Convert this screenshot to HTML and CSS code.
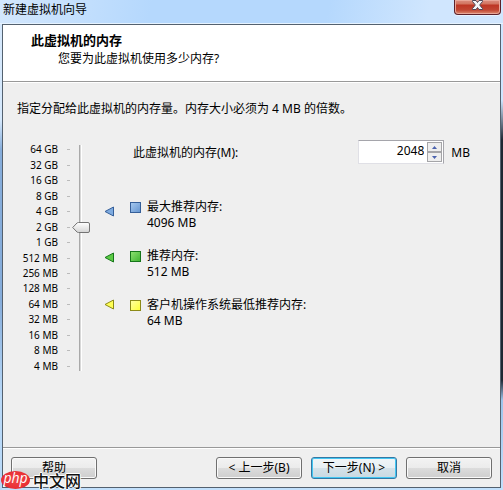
FILE: index.html
```html
<!DOCTYPE html>
<html lang="zh-CN">
<head>
<meta charset="utf-8">
<title>新建虚拟机向导</title>
<link rel="stylesheet" href="styles.css">
</head>
<body>
<header class="titlebar">
  <span class="title">新建虚拟机向导</span>
  <button class="close" type="button" aria-label="关闭">
    <svg width="13" height="11" viewBox="0 0 13 11"><path d="M1.5 .5H5L6.5 2.5 8 .5h3.500v1L9 4.500v1L11.500 8.500v1H8L6.500 7.500 5 9.500H1.500v-1L4 5.500v-1L1.500 1.500z" fill="#f4f4f6" stroke="#4c4658" stroke-width="1"/></svg>
  </button>
</header>
<form class="client">
  <div class="banner">
    <h1>此虚拟机的内存</h1>
    <p>您要为此虚拟机使用多少内存?</p>
  </div>
  <main>
    <p class="intro">指定分配给此虚拟机的内存量。内存大小必须为 4 MB 的倍数。</p>
    <div class="settings">
      <div class="scale">
        <ol class="ticks">
          <li>64 GB</li><li>32 GB</li><li>16 GB</li><li>8 GB</li><li>4 GB</li>
          <li>2 GB</li><li>1 GB</li><li>512 MB</li><li>256 MB</li><li>128 MB</li>
          <li>64 MB</li><li>32 MB</li><li>16 MB</li><li>8 MB</li><li>4 MB</li>
        </ol>
        <input class="slider" type="range" min="0" max="14" value="9" aria-label="内存">
        <div class="markers">
          <svg class="max" width="11" height="11" viewBox="0 0 11 11"><path d="M1 5.500 9.500 1v9z" fill="#7eabe0" stroke="#355f99"/></svg>
          <svg class="rec" width="11" height="11" viewBox="0 0 11 11"><path d="M1 5.500 9.500 1v9z" fill="#5ccb45" stroke="#16761b"/></svg>
          <svg class="min" width="11" height="11" viewBox="0 0 11 11"><path d="M1 5.500 9.500 1v9z" fill="#ffff55" stroke="#8c8a18"/></svg>
        </div>
      </div>
      <div class="details">
        <div class="field">
          <label for="memory">此虚拟机的内存(M):</label>
          <div class="spinner">
            <input id="memory" type="text" value="2048">
            <div class="steps">
              <button type="button" aria-label="增加"><svg width="5" height="3" viewBox="0 0 5 3"><path d="M0 3 2.500 0 5 3z" fill="#4b62ae"/></svg></button>
              <button type="button" aria-label="减少"><svg width="5" height="3" viewBox="0 0 5 3"><path d="M0 0 2.500 3 5 0z" fill="#4b62ae"/></svg></button>
            </div>
          </div>
          <span>MB</span>
        </div>
        <dl class="legend">
          <div class="blue"><dt>最大推荐内存:</dt><dd>4096 MB</dd></div>
          <div class="green"><dt>推荐内存:</dt><dd>512 MB</dd></div>
          <div class="yellow"><dt>客户机操作系统最低推荐内存:</dt><dd>64 MB</dd></div>
        </dl>
      </div>
    </div>
  </main>
  <footer>
    <button class="btn help" type="button">帮助</button>
    <button class="btn" type="button">&lt; 上一步(B)</button>
    <button class="btn primary" type="button">下一步(N) &gt;</button>
    <button class="btn" type="button">取消</button>
  </footer>
</form>
<div class="watermark"><span class="logo">php</span><span class="site">中文网</span></div>
</body>
</html>
```
FILE: styles.css
```css
* {
  box-sizing: border-box;
}

body {
  display: flex;
  flex-direction: column;
  min-height: 100vh;
  margin: 0;
  background:
    linear-gradient(#cfe6ff 0 100px, #1e2733 140px 380px, #9cc4ea 400px, #c2e0fc) right / 2px 100% no-repeat,
    linear-gradient(#d5e8fc 0 120px, #86addb 150px 300px, #b9d9f8 400px) left / 2px 100% no-repeat,
    #c2e0fc;
  color: #000;
  font: 12px/16px "Noto Sans", "Noto Sans CJK SC", sans-serif;
}

h1, p, ol, dl, dd {
  margin: 0;
  padding: 0;
}

button, input {
  font: inherit;
  color: inherit;
}

.titlebar {
  display: flex;
  justify-content: space-between;
  height: 24px;
  padding: 0 2px 0 3px;
  border-bottom: 1px solid #e6f3ff;
  background: linear-gradient(100deg, #d3e7fd, #b5d8fd 30%, #b5d8fd 65%, #d0e6fe 85%);
}

.title {
  padding-top: 2px;
}

.close {
  display: flex;
  justify-content: center;
  width: 47px;
  height: 15px;
  padding: 0;
  border: 1px solid #5c2029;
  border-top: 0;
  border-radius: 0 0 4px 4px;
  background: linear-gradient(#dc8e80, #d2745f 4px, #bd3524 5px, #c14632 10px, #dd8d72);
  box-shadow: inset 0 0 0 1px #e9a799, 0 1px #e8f3ff;
}

.client {
  display: flex;
  flex: 1;
  flex-direction: column;
  margin: 0 2px 2px;
  border: 1px solid #54616f;
  background: #efefef;
}

.banner {
  height: 58px;
  padding: 6px 28px 0;
  border-bottom: 1px solid #fff;
  background: #fff linear-gradient(#999, #999) bottom / 100% 1px no-repeat;
}

.banner h1 {
  padding-bottom: 2px;
  font-size: 13px;
  line-height: 18px;
}

.banner p {
  padding-left: 27px;
}

main {
  flex: 1;
  padding: 18px 14px 0;
}

.settings {
  display: flex;
  gap: 15px;
  padding-top: 25px;
}

.scale {
  display: flex;
  height: 232px;
}

.ticks {
  display: flex;
  flex-direction: column;
  width: 53px;
  font-size: 10px;
  list-style: none;
}

.ticks li {
  display: flex;
  flex: 1;
  align-items: center;
  justify-content: flex-end;
  gap: 9px;
  line-height: 15px;
}

.ticks li::after {
  width: 3px;
  height: 1px;
  background: #bbb;
  content: "";
}

.slider {
  width: 20px;
  height: 226px;
  margin: 3px 0 0 2px;
  appearance: none;
  background: linear-gradient(90deg, #a9a9a9 0 1px, #d8d8d8 1px 2px, #fff 2px 3px) 7px 0 / 3px 100% no-repeat;
  writing-mode: vertical-lr;
  direction: rtl;
}

.slider::-webkit-slider-runnable-track {
  width: 20px;
  height: 100%;
}

.slider::-webkit-slider-thumb {
  width: 20px;
  height: 11px;
  appearance: none;
  background: url("data:image/svg+xml,%3Csvg xmlns='http://www.w3.org/2000/svg' width='20' height='11'%3E%3Cdefs%3E%3ClinearGradient id='g' x2='0' y2='1'%3E%3Cstop stop-color='%23fff'/%3E%3Cstop offset='1' stop-color='%23d4d4d4'/%3E%3C/linearGradient%3E%3C/defs%3E%3Cpath d='M.7 5.500 5 1Q5.500.5 6.500.5H16Q17.500.5 17.500 2V9Q17.500 10.500 16 10.500H6.500Q5.500 10.500 5 10z' fill='url(%23g)' stroke='%23747474'/%3E%3C/svg%3E") no-repeat;
}

.markers {
  display: grid;
  grid-template-rows: repeat(15, 1fr);
  align-items: center;
  margin-left: 12px;
}

.max {
  grid-row: 5;
}

.rec {
  grid-row: 8;
}

.min {
  grid-row: 11;
}

.details {
  flex: 1;
}

.field {
  display: flex;
  align-items: center;
  height: 24px;
  margin: -2px 16px 0 3px;
}

.field label {
  flex: 1;
  padding-top: 2px;
}

.field span {
  padding-top: 2px;
}

.spinner {
  display: flex;
  width: 86px;
  height: 24px;
  margin-right: 7px;
  padding: 1px;
  border: 1px solid;
  border-color: #a5a5ab #a5a5ab #e0e0e6 #e0e0e6;
  background: #fff;
}

.spinner input {
  flex: 1;
  min-width: 0;
  padding: 0 3px 2px;
  border: 0;
  outline: 0;
  background: none;
  text-align: right;
}

.steps {
  display: grid;
  grid-template-rows: 1fr 1fr;
  width: 15px;
}

.steps button {
  display: flex;
  align-items: center;
  justify-content: center;
  padding: 0;
  border: 1px solid #a5a5a8;
  background: #eee;
}

.legend {
  display: grid;
  gap: 17px;
  padding-top: 35px;
}

.legend div {
  display: grid;
  grid-template-columns: 9px 1fr;
  column-gap: 8px;
  align-items: center;
}

.legend div::before {
  width: 9px;
  height: 9px;
  border: 1px solid;
  content: "";
}

.legend dd {
  grid-column: 2;
}

.legend .blue::before {
  border-color: #355f99;
  background: linear-gradient(135deg, #a5c8ef, #6796d0);
}

.legend .green::before {
  border-color: #16761b;
  background: linear-gradient(135deg, #8be070, #43b535);
}

.legend .yellow::before {
  border-color: #8c8a18;
  background: linear-gradient(135deg, #ffffa0, #ffff3a);
}

footer {
  display: flex;
  gap: 9px;
  padding: 9px 8px 8px;
  border-top: 1px solid #999;
  box-shadow: inset 0 1px #fff;
}

.btn {
  width: 86px;
  height: 22px;
  padding: 0;
  border: 1px solid #707070;
  border-radius: 3px;
  background: linear-gradient(#f3f3f3, #ebebeb 50%, #dcdcdc 50%, #cecece);
  box-shadow: inset 0 0 0 1px #fafafa;
  line-height: 20px;
}

.help {
  margin-right: auto;
}

.primary {
  border-color: #3478a4;
  background: linear-gradient(#f1f5f7, #e7eff3 50%, #d5e2e9 50%, #c9d9e2);
  box-shadow: inset 0 0 0 1px #43c6f2;
}

.watermark {
  position: absolute;
  bottom: 1px;
  left: 1px;
  display: flex;
  align-items: center;
  gap: 3px;
  height: 18px;
}

.logo {
  width: 29px;
  height: 18px;
  border-radius: 50%;
  background: radial-gradient(#f04848, #e5222b);
  color: #fff;
  font: italic 14px/14px "Open Sans", sans-serif;
  text-align: center;
}

.site {
  color: #111;
  font: 500 16px/16px "Noto Sans CJK SC", sans-serif;
  text-shadow: 1px 0 #fff, -1px 0 #fff, 0 1px #fff, 0 -1px #fff;
}
```
